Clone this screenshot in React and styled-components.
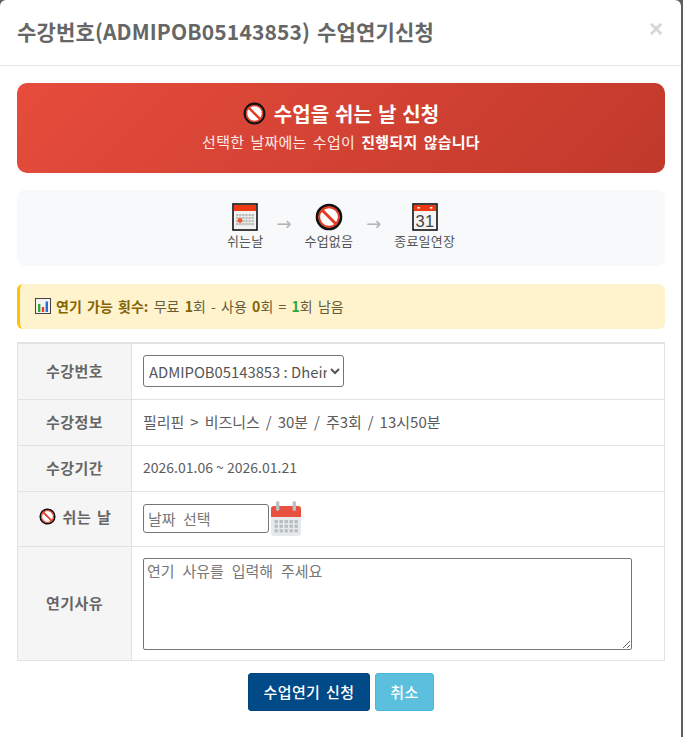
import React from "react";
import styled, { createGlobalStyle } from "styled-components";

const Global = createGlobalStyle`
  html, body { margin: 0; padding: 0; background: #5f5f5f; }
  body {
    font-family: "Noto Sans CJK KR", "Noto Sans", sans-serif;
    color: #555;
    overflow: hidden;
  }
  * { box-sizing: border-box; }
`;

const Page = styled.div`
  width: 683px;
  height: 737px;
  background: #5f5f5f;
`;

const Modal = styled.div`
  width: 681px;
  height: 737px;
  background: #fff;
  border-radius: 6px 6px 0 0;
`;

const Header = styled.div`
  height: 66px;
  padding: 0 17px 4px;
  display: flex;
  align-items: center;
  justify-content: space-between;
  border-bottom: 1px solid #e5e5e5;
`;

const Title = styled.h4`
  margin: 0;
  font-size: 21px;
  line-height: 32px;
  font-weight: 700;
  letter-spacing: 0.15px;
  word-spacing: 2px;
  color: #666;
`;

const Close = styled.span`
  font-family: "Liberation Sans", sans-serif;
  font-size: 24px;
  font-weight: 700;
  color: #d6d6d6;
  line-height: 24px;
  margin: -4px 1px 0 0;
`;

const Body = styled.div`
  padding: 17px 16px 0 17px;
`;

const Hero = styled.div`
  height: 90px;
  padding-bottom: 5px;
  border-radius: 10px;
  background: linear-gradient(135deg, #e74c3c, #c0392b);
  color: #fff;
  display: flex;
  flex-direction: column;
  align-items: center;
  justify-content: center;
`;

const HeroTitle = styled.div`
  display: flex;
  align-items: center;
  gap: 8px;
  font-size: 20px;
  line-height: 30px;
  font-weight: 700;
  word-spacing: 1.5px;
`;

const HeroText = styled.div`
  font-size: 15px;
  line-height: 22px;
  margin-top: 2px;
  letter-spacing: 0.25px;
  word-spacing: 2.6px;
  color: #fbe9e7;
  b { font-weight: 700; color: #fff; }
`;

const Steps = styled.div`
  margin-top: 17px;
  height: 76px;
  border-radius: 8px;
  background: #f8f9fa;
  display: flex;
  justify-content: center;
  align-items: flex-start;
  padding-top: 13px;
`;

const Step = styled.div`
  display: flex;
  flex-direction: column;
  align-items: center;
  font-size: 13px;
  line-height: 18px;
  letter-spacing: 0.2px;
  color: #555;
  svg { display: block; margin-bottom: 1px; }
`;

const Arrow = styled.span`
  font-family: "DejaVu Sans", sans-serif;
  font-size: 18px;
  line-height: 20px;
  color: #b4b4b4;
  margin: 11px 13px 0;
`;

const Notice = styled.div`
  margin-top: 18px;
  height: 45px;
  padding: 0 15px 2px;
  border-left: 3px solid #ffc107;
  border-radius: 6px;
  background: #fff3cd;
  color: #665c3a;
  font-size: 14px;
  word-spacing: 2.1px;
  display: flex;
  align-items: center;
  gap: 5px;
  b { font-weight: 700; color: #856404; }
  em { font-style: normal; font-weight: 700; color: #856404; }
  i { font-style: normal; font-weight: 700; color: #28a745; }
`;

const Table = styled.table`
  margin-top: 13px;
  width: 648px;
  border-collapse: collapse;
  table-layout: fixed;
  border-top: 2px solid #e2e2e2;
`;

const Row = styled.tr`
  height: ${(p) => p.$h}px;
`;

const Th = styled.th`
  width: 114px;
  background: #f5f5f5;
  border: 1px solid #e2e2e2;
  font-size: 15px;
  font-weight: 700;
  letter-spacing: 0.5px;
  word-spacing: 2px;
  color: #666;
  text-align: center;
  padding: 0 0 2px;
`;

const ThInner = styled.span`
  display: inline-flex;
  align-items: center;
  gap: 7px;
  margin-left: 1px;
`;

const Td = styled.td`
  border: 1px solid #e2e2e2;
  color: #5c5c5c;
  padding: 0 0 0 11px;
  vertical-align: ${(p) => (p.$top ? "top" : "middle")};
`;

const CellText = styled.div`
  margin-top: -2px;
  font-size: ${(p) => p.$size}px;
  word-spacing: ${(p) => p.$space}px;
`;

const Select = styled.select`
  display: block;
  width: 201px;
  height: 32px;
  font-family: inherit;
  font-size: 14.8px;
  color: #555;
  background: #fff;
  border: 1px solid #767676;
  border-radius: 3px;
  padding: 0 0 0 1px;
`;

const DateRow = styled.div`
  display: flex;
  align-items: center;
  gap: 2px;
`;

const DateInput = styled.input`
  width: 126px;
  height: 29px;
  font-family: inherit;
  font-size: 15px;
  word-spacing: 4px;
  border: 1px solid #767676;
  border-radius: 3px;
  padding: 0 4px;
  &::placeholder { color: #777; opacity: 1; }
`;

const Reason = styled.textarea`
  display: block;
  margin-top: 11px;
  width: 489px;
  height: 92px;
  font-family: inherit;
  font-size: 15px;
  word-spacing: 4.5px;
  line-height: 20px;
  border: 1px solid #767676;
  border-radius: 2px;
  padding: 2px 3px;
  &::placeholder { color: #777; opacity: 1; }
`;

const Buttons = styled.div`
  margin-top: 12px;
  display: flex;
  justify-content: center;
  gap: 5px;
`;

const Button = styled.button`
  height: 38px;
  width: ${(p) => p.$w}px;
  border-radius: 3px;
  font-family: inherit;
  font-size: 15px;
  font-weight: 500;
  letter-spacing: 0.4px;
  word-spacing: 2px;
  color: #fff;
  padding: 0;
  border: 1px solid ${(p) => p.$border};
  background: ${(p) => p.$bg};
`;

const NoEntry = ({ size }) => (
  <svg width={size} height={size} viewBox="0 0 24 24">
    <circle cx="12" cy="12" r="10.2" fill="#fff" stroke="#111" strokeWidth="2.4" />
    <circle cx="12" cy="12" r="8.4" fill="none" stroke="#e53a25" strokeWidth="1.6" />
    <path d="M5.6 5.6 18.4 18.4" stroke="#e53a25" strokeWidth="2.6" />
  </svg>
);

const TornCalendar = () => (
  <svg width="26" height="28" viewBox="0 0 26 28">
    <rect x="1" y="1" width="24" height="26" fill="#f2f2f2" stroke="#111" strokeWidth="1.6" />
    <rect x="2" y="2" width="22" height="6" fill="#ee3a12" />
    {[0, 1, 2, 3].map((r) =>
      [0, 1, 2, 3, 4, 5].map((c) => (
        <rect key={r + "-" + c} x={4 + c * 3.1} y={11 + r * 3} width="2.4" height="2.2" fill="#bdbdbd" />
      ))
    )}
    <circle cx="8" cy="17.5" r="2.4" fill="#ee5a30" />
  </svg>
);

const DayCalendar = () => (
  <svg width="26" height="28" viewBox="0 0 26 28">
    <rect x="1" y="1" width="24" height="26" fill="#f4f4f4" stroke="#111" strokeWidth="1.6" />
    <rect x="2" y="2" width="22" height="6" fill="#ee3a12" />
    <rect x="5.5" y="4" width="2.4" height="1.6" fill="#fff" />
    <rect x="18" y="4" width="2.4" height="1.6" fill="#fff" />
    <text x="13" y="23.5" textAnchor="middle" fontFamily="Liberation Sans, sans-serif" fontSize="16.5" fill="#444">31</text>
  </svg>
);

const BarChart = () => (
  <svg width="16" height="16" viewBox="0 0 16 16">
    <rect x="0.5" y="0.5" width="15" height="15" fill="#f3f3f3" stroke="#444" />
    <rect x="3" y="6" width="2.4" height="8" fill="#35a83a" />
    <rect x="6.8" y="9" width="2.4" height="5" fill="#e8402a" />
    <rect x="10.6" y="3.5" width="2.4" height="10.5" fill="#2a6fd0" />
  </svg>
);

const FlatCalendar = () => (
  <svg width="30" height="35" viewBox="0 0 30 35">
    <rect x="0" y="5" width="30" height="30" rx="3" fill="#e6eaec" />
    <path d="M0 16V8a3 3 0 0 1 3-3h24a3 3 0 0 1 3 3v8z" fill="#e8503f" />
    <rect x="5" y="0" width="3.4" height="10" rx="1.7" fill="#b9c0c4" />
    <rect x="21.6" y="0" width="3.4" height="10" rx="1.7" fill="#b9c0c4" />
    {[0, 1, 2].map((r) =>
      [0, 1, 2, 3, 4].map((c) => (
        <rect key={r + "-" + c} x={3.5 + c * 5} y={19 + r * 4.6} width="3.4" height="3.2" fill="#b7bec2" />
      ))
    )}
  </svg>
);

export default function App() {
  return (
    <Page>
      <Global />
      <Modal>
        <Header>
          <Title>수강번호(ADMIPOB05143853) 수업연기신청</Title>
          <Close>×</Close>
        </Header>
        <Body>
          <Hero>
            <HeroTitle>
              <NoEntry size={23} />
              수업을 쉬는 날 신청
            </HeroTitle>
            <HeroText>
              선택한 날짜에는 수업이 <b>진행되지 않습니다</b>
            </HeroText>
          </Hero>

          <Steps>
            <Step>
              <TornCalendar />
              쉬는날
            </Step>
            <Arrow>→</Arrow>
            <Step>
              <NoEntry size={28} />
              수업없음
            </Step>
            <Arrow>→</Arrow>
            <Step>
              <DayCalendar />
              종료일연장
            </Step>
          </Steps>

          <Notice>
            <BarChart />
            <span>
              <b>연기 가능 횟수:</b> 무료 <em>1</em>회 - 사용 <em>0</em>회 = <i>1</i>회 남음
            </span>
          </Notice>

          <Table>
            <tbody>
              <Row $h={56}>
                <Th>수강번호</Th>
                <Td>
                  <Select defaultValue="a">
                    <option value="a">ADMIPOB05143853 : Dheine</option>
                  </Select>
                </Td>
              </Row>
              <Row $h={46}>
                <Th>수강정보</Th>
                <Td>
                  <CellText $size={15} $space={2.6}>필리핀 &gt; 비즈니스 / 30분 / 주3회 / 13시50분</CellText>
                </Td>
              </Row>
              <Row $h={46}>
                <Th>수강기간</Th>
                <Td>
                  <CellText $size={14} $space={0}>2026.01.06 ~ 2026.01.21</CellText>
                </Td>
              </Row>
              <Row $h={55}>
                <Th>
                  <ThInner>
                    <NoEntry size={17} />
                    쉬는 날
                  </ThInner>
                </Th>
                <Td>
                  <DateRow>
                    <DateInput placeholder="날짜 선택" />
                    <FlatCalendar />
                  </DateRow>
                </Td>
              </Row>
              <Row $h={114}>
                <Th>연기사유</Th>
                <Td $top>
                  <Reason placeholder="연기 사유를 입력해 주세요" />
                </Td>
              </Row>
            </tbody>
          </Table>

          <Buttons>
            <Button $w={122} $bg="#004a87" $border="#00427a">수업연기 신청</Button>
            <Button $w={59} $bg="#5bc0de" $border="#46b8da">취소</Button>
          </Buttons>
        </Body>
      </Modal>
    </Page>
  );
}
